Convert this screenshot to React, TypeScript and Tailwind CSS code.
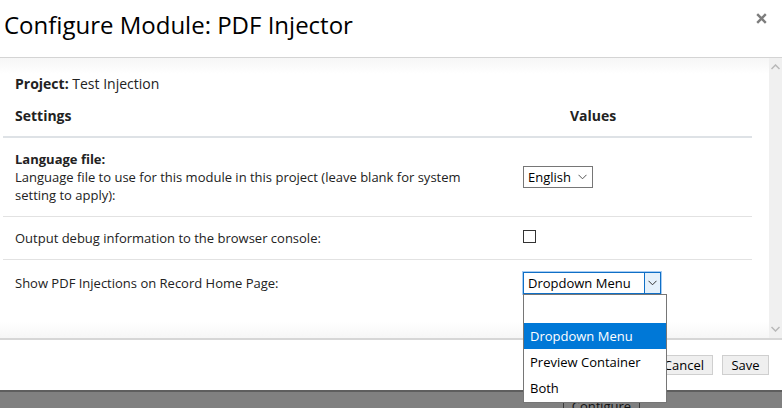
import React from "react";

const Chevron = ({ className = "" }: { className?: string }) => (
  <svg width="9" height="6" viewBox="0 0 9 6" className={className}>
    <path d="M0.5 0.8 L4.5 4.8 L8.5 0.8" fill="none" stroke="currentColor" strokeWidth="1" />
  </svg>
);

export default function App() {
  return (
    <div
      className="relative w-[782px] h-[408px] overflow-hidden bg-white text-[#222]"
      style={{ fontFamily: '"Open Sans", "Noto Sans", sans-serif' }}
    >
      {/* Header */}
      <div className="h-[58px] border-b border-[#d4d4d4] flex items-start justify-between">
        <h1 className="pl-[4px] pt-[8px] text-[24px] leading-[34px] text-black font-normal">
          Configure Module: PDF Injector
        </h1>
        <div className="pt-[13px] pr-[15px]">
          <svg width="11" height="11" viewBox="0 0 11 11">
            <path d="M1.2 1.2 L9.8 9.8 M9.8 1.2 L1.2 9.8" stroke="#7d7d7d" strokeWidth="2.4" />
          </svg>
        </div>
      </div>

      {/* Body */}
      <div className="h-[280px] flex">
        <div className="relative flex-1 bg-white">
          <div className="absolute inset-x-0 top-0 h-[16px] bg-gradient-to-b from-[#f6f6f6] to-white" />
          <div className="absolute inset-x-0 bottom-0 h-[16px] bg-gradient-to-b from-white to-[#f6f6f6]" />
          <div className="relative pl-[3px] w-[752px]">
            <div className="pl-[12px] pt-[16px] text-[14px] leading-[19px]">
              <span className="font-bold">Project:</span> Test Injection
            </div>
            {/* Table header */}
            <div className="flex border-b-2 border-[#dee2e6] h-[45px] text-[14px] font-bold leading-[19px]">
              <div className="w-[508px] pl-[12px] pt-[13px]">Settings</div>
              <div className="pl-[59px] pt-[13px]">Values</div>
            </div>
            {/* Row 1 */}
            <div className="flex items-center border-b border-[#e2e2e2] h-[79px] text-[13px] leading-[18px]">
              <div className="w-[508px] pl-[12px] pr-[34px]">
                <div className="font-bold">Language file:</div>
                <div>
                  Language file to use for this module in this project (leave blank for system setting to apply):
                </div>
              </div>
              <div className="pl-[12px]">
                <div className="w-[70px] h-[22px] border border-[#767676] flex items-center justify-between pl-[4px] pr-[5px] bg-white">
                  <span className="text-[13px] text-black">English</span>
                  <Chevron className="text-[#555]" />
                </div>
              </div>
            </div>
            {/* Row 2 */}
            <div className="flex items-center border-b border-[#e2e2e2] h-[43px] text-[13px] leading-[18px]">
              <div className="w-[508px] pl-[12px]">Output debug information to the browser console:</div>
              <div className="pl-[12px] pb-[3px]">
                <div className="w-[13px] h-[13px] border border-[#333] bg-white" />
              </div>
            </div>
            {/* Row 3 */}
            <div className="flex items-start h-[46px] text-[13px] leading-[18px]">
              <div className="w-[508px] pl-[12px] pt-[14px]">Show PDF Injections on Record Home Page:</div>
              <div className="pl-[12px] pt-[12px]">
                <div className="w-[138px] h-[22px] border border-[#0f6fc6] ring-1 ring-[#a8cdf3] flex items-stretch bg-white">
                  <span className="flex-1 pl-[4px] text-[13px] leading-[20px] text-black">Dropdown Menu</span>
                  <span className="w-[16px] border-l border-[#0f6fc6] bg-[#e5f1fb] flex items-center justify-center">
                    <Chevron className="text-[#333]" />
                  </span>
                </div>
              </div>
            </div>
          </div>
        </div>
        {/* Scrollbar */}
        <div className="w-[13px] bg-[#f0f0f0] flex flex-col justify-between items-center py-[6px]">
          <svg width="9" height="6" viewBox="0 0 9 6">
            <path d="M0.5 5 L4.5 1 L8.5 5" fill="none" stroke="#b8b8b8" strokeWidth="1.5" />
          </svg>
          <svg width="9" height="6" viewBox="0 0 9 6">
            <path d="M0.5 1 L4.5 5 L8.5 1" fill="none" stroke="#b8b8b8" strokeWidth="1.5" />
          </svg>
        </div>
      </div>

      {/* Footer */}
      <div className="h-[52px] border-t-2 border-[#d6d6d6] flex items-start justify-end gap-[9px] pr-[13px] pt-[15px]">
        <button className="h-[20px] px-[8px] bg-[#efefef] border border-[#cfcfcf] text-[13px] leading-[18px] text-black">
          Cancel
        </button>
        <button className="h-[20px] w-[47px] bg-[#efefef] border border-[#cfcfcf] text-[13px] leading-[18px] text-black">
          Save
        </button>
      </div>

      {/* Backdrop strip */}
      <div className="h-[18px] bg-[#808080] border-t-2 border-[#5e5e5e] pl-[563px] pt-[5px]">
        <div className="w-[77px] h-[20px] border-x border-[#3a3a3a] text-center text-[13px] leading-[18px] text-[#111]">
          Configure
        </div>
      </div>

      {/* Open dropdown list */}
      <div className="absolute left-[523px] top-[294px] w-[144px] h-[109px] border border-[#767676] bg-white text-[13px] text-black">
        <div className="h-[28px]" />
        <div className="h-[26px] bg-[#0078d7] text-white pl-[6px] leading-[26px]">Dropdown Menu</div>
        <div className="h-[26px] pl-[6px] leading-[26px]">Preview Container</div>
        <div className="h-[26px] pl-[6px] leading-[26px]">Both</div>
      </div>
    </div>
  );
}
